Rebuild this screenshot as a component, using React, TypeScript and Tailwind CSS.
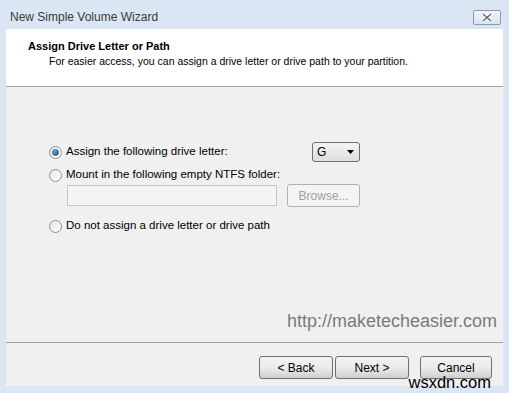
import { useState } from "react";

const FONT = { fontFamily: '"Liberation Sans", Arial, sans-serif' };

function Radio({ checked }: { checked: boolean }) {
  return (
    <span className="w-[13px] h-[13px] rounded-full border border-[#8e8f8f] bg-gradient-to-br from-[#e6e6e6] to-[#ffffff] flex items-center justify-center shrink-0">
      {checked ? (
        <span className="w-[7px] h-[7px] rounded-full bg-gradient-to-br from-[#7cc4ee] to-[#0d4f85] border border-[#2a5d90]" />
      ) : null}
    </span>
  );
}

function Btn({ label, disabled, w }: { label: string; disabled?: boolean; w: string }) {
  return (
    <button
      type="button"
      className={`${w} h-[23px] block rounded-[3px] border border-[#707070] bg-gradient-to-b from-[#f2f2f2] via-[#ebebeb] to-[#cfcfcf] text-[12px] ${
        disabled ? "text-[#a0a0a0] border-[#adb2b5] from-[#f4f4f4] to-[#f4f4f4] via-[#f4f4f4]" : "text-[#000]"
      }`}
    >
      {label}
    </button>
  );
}

export default function App() {
  const [choice] = useState<"letter" | "folder" | "none">("letter");

  return (
    <div style={FONT} className="w-[509px] h-[393px] bg-[#dae6f4] flex flex-col overflow-hidden">
      {/* 标题栏 */}
      <div className="h-[29px] flex items-center justify-between pl-[10px] pr-[8px]">
        <span className="text-[12px] text-[#3a3a3a] pt-[4px]">New Simple Volume Wizard</span>
        <span className="w-[28px] h-[15px] mt-[6px] border border-[#8a9bb0] rounded-[2px] bg-gradient-to-b from-[#f2f5f9] to-[#dbe3ec] flex items-center justify-center">
          <svg width="12" height="9" viewBox="0 0 12 9">
            <path d="M2 1 L10 8 M10 1 L2 8" stroke="#fff" strokeWidth="3.4" />
            <path d="M2 1 L10 8 M10 1 L2 8" stroke="#5a6678" strokeWidth="1.4" />
          </svg>
        </span>
      </div>

      <div className="mx-[6px] flex-1 flex flex-col bg-[#f0f0f0] mb-[7px]">
        {/* 头部 */}
        <div className="h-[58px] bg-white border-b border-[#a0a0a0] pl-[22px] pt-[10px]">
          <div className="text-[11px] font-bold text-black leading-[14px]">Assign Drive Letter or Path</div>
          <div className="text-[10.5px] text-black leading-[14px] mt-[1px] pl-[21px]">
            For easier access, you can assign a drive letter or drive path to your partition.
          </div>
        </div>

        {/* 选项 */}
        <div className="flex-1 pl-[43px] pr-[143px] pt-[55px] relative text-[11.5px] text-black">
          <div className="flex items-center justify-between h-[20px]">
            <div className="flex items-center gap-[4px]">
              <Radio checked={choice === "letter"} />
              <span>Assign the following drive letter:</span>
            </div>
            <div className="w-[48px] h-[20px] rounded-[3px] border border-[#707070] bg-gradient-to-b from-[#f4f4f4] to-[#dedede] flex items-center justify-between pl-[4px] pr-[5px] text-[12px]">
              <span>G</span>
              <svg width="7" height="4" viewBox="0 0 7 4">
                <path d="M0 0 H7 L3.5 4 Z" fill="#000" />
              </svg>
            </div>
          </div>
          <div className="flex items-center gap-[4px] h-[16px] mt-[5px]">
            <Radio checked={choice === "folder"} />
            <span>Mount in the following empty NTFS folder:</span>
          </div>
          <div className="flex items-center gap-[10px] pl-[18px] mt-[1px]">
            <div className="w-[211px] h-[21px] border border-[#c6c6c6] bg-[#f4f4f4]" />
            <Btn label="Browse..." disabled w="w-[73px]" />
          </div>
          <div className="flex items-center gap-[4px] h-[16px] mt-[11px]">
            <Radio checked={choice === "none"} />
            <span>Do not assign a drive letter or drive path</span>
          </div>
          <div className="absolute right-[6px] bottom-[7px] text-[18px] text-[#7a7a7a]">http://maketecheasier.com</div>
        </div>

        {/* 底部按钮 */}
        <div className="h-[44px] border-t border-[#a0a0a0] flex items-start justify-end pr-[11px] pt-[13px] relative">
          <div className="flex gap-[2px]">
            <Btn label="< Back" w="w-[74px]" />
            <Btn label="Next >" w="w-[74px]" />
          </div>
          <div className="ml-[11px] flex">
            <Btn label="Cancel" w="w-[72px]" />
          </div>
          <span className="absolute right-[12px] bottom-[-5px] text-[16.5px] text-black leading-[18px]">wsxdn.com</span>
        </div>
      </div>
    </div>
  );
}
